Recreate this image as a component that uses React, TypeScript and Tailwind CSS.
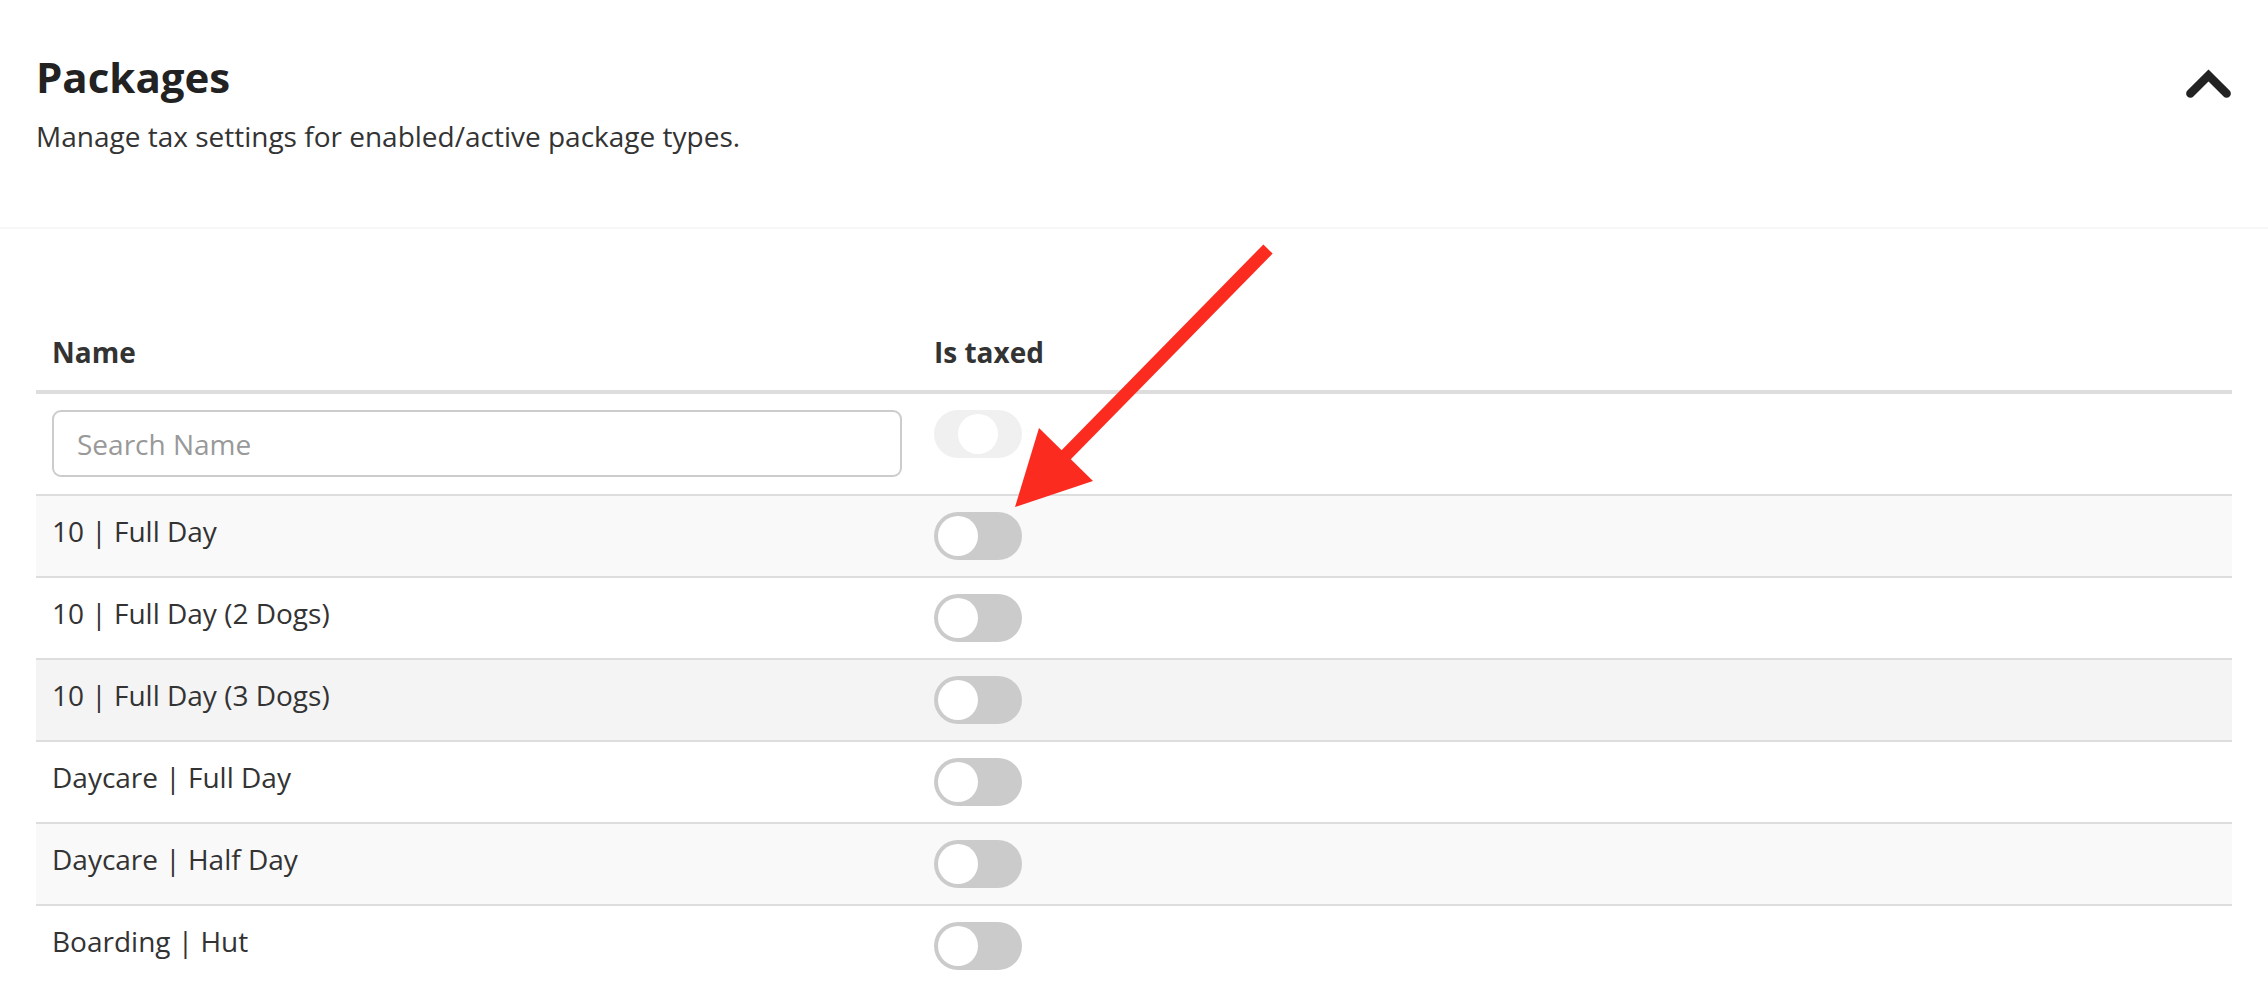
import { useState } from 'react';

type Pkg = { name: string; taxed: boolean; bg: string };

const packages: Pkg[] = [
  { name: '10 | Full Day', taxed: false, bg: 'bg-[#f9f9f9]' },
  { name: '10 | Full Day (2 Dogs)', taxed: false, bg: 'bg-white' },
  { name: '10 | Full Day (3 Dogs)', taxed: false, bg: 'bg-[#f4f4f4]' },
  { name: 'Daycare | Full Day', taxed: false, bg: 'bg-white' },
  { name: 'Daycare | Half Day', taxed: false, bg: 'bg-[#f9f9f9]' },
  { name: 'Boarding | Hut', taxed: false, bg: 'bg-white' },
];

function Toggle({ on }: { on: boolean }) {
  return (
    <div className={on ? 'relative h-[48px] w-[88px] rounded-full bg-[#4caf50]' : 'relative h-[48px] w-[88px] rounded-full bg-[#cbcbcb]'}>
      <div
        className={
          on
            ? 'absolute top-[4px] left-[44px] h-[40px] w-[40px] rounded-full bg-white'
            : 'absolute top-[4px] left-[4px] h-[40px] w-[40px] rounded-full bg-white'
        }
      />
    </div>
  );
}

function IndeterminateToggle() {
  return (
    <div className="relative h-[48px] w-[88px] rounded-full bg-[#f0f0f0]">
      <div className="absolute top-[4px] left-[24px] h-[40px] w-[40px] rounded-full bg-white" />
    </div>
  );
}

function ChevronUp() {
  return (
    <svg width="47" height="30" viewBox="0 0 47 30" className="mt-[21px]">
      <polyline
        points="5.4,24.5 23.5,6.4 41.6,24.5"
        fill="none"
        stroke="#222"
        strokeWidth="8.5"
        strokeLinecap="round"
        strokeLinejoin="miter"
      />
    </svg>
  );
}

function Arrow() {
  return (
    <svg
      className="pointer-events-none absolute left-0 top-0"
      width="2268"
      height="984"
      viewBox="0 0 2268 984"
    >
      <line x1="1268" y1="249" x2="1062" y2="459" stroke="#fc2b20" strokeWidth="13" />
      <polygon points="1039,428 1093,481 1015,507" fill="#fc2b20" />
    </svg>
  );
}

export default function App() {
  const [rows, setRows] = useState(packages);
  const [query, setQuery] = useState('');

  const visible = rows.filter((r) => r.name.toLowerCase().includes(query.toLowerCase()));

  return (
    <div
      className="relative min-h-[984px] w-[2268px] overflow-hidden bg-white text-[#333]"
      style={{ fontFamily: '"Open Sans", "Noto Sans", sans-serif' }}
    >
      <div className="flex items-start justify-between border-b-2 border-[#f7f7f7] px-[36px] pt-[48px] pb-[72px]">
        <div>
          <h1 className="text-[42px] leading-[57px] font-bold text-[#222]">Packages</h1>
          <p className="mt-[12px] text-[28px] leading-[38px] text-[#333]">
            Manage tax settings for enabled/active package types.
          </p>
        </div>
        <ChevronUp />
      </div>

      <div className="mx-[36px] mt-[88px]">
        <div className="grid grid-cols-[882px_1fr] border-b-4 border-[#dddddd] text-[28px] leading-[38px] font-bold text-[#333]">
          <div className="px-[16px] pt-[16px] pb-[19px]">Name</div>
          <div className="px-[16px] pt-[16px] pb-[19px]">Is taxed</div>
        </div>

        <div className="grid grid-cols-[882px_1fr] bg-white">
          <div className="px-[16px] pt-[16px] pb-[17px]">
            <input
              value={query}
              onChange={(e) => setQuery(e.target.value)}
              placeholder="Search Name"
              className="h-[67px] w-full rounded-[9px] border-2 border-[#cccccc] bg-white px-[23px] text-[28px] text-[#333] outline-none placeholder:text-[#999]"
            />
          </div>
          <div className="px-[16px] pt-[16px]">
            <IndeterminateToggle />
          </div>
        </div>

        {visible.map((row) => (
          <div
            key={row.name}
            className={`grid grid-cols-[882px_1fr] border-t-2 border-[#dddddd] ${row.bg}`}
            onClick={() =>
              setRows((prev) => prev.map((r) => (r.name === row.name ? { ...r, taxed: !r.taxed } : r)))
            }
          >
            <div className="p-[16px] text-[28px] leading-[38px] text-[#333]">{row.name}</div>
            <div className="p-[16px]">
              <Toggle on={row.taxed} />
            </div>
          </div>
        ))}
      </div>

      <Arrow />
    </div>
  );
}
